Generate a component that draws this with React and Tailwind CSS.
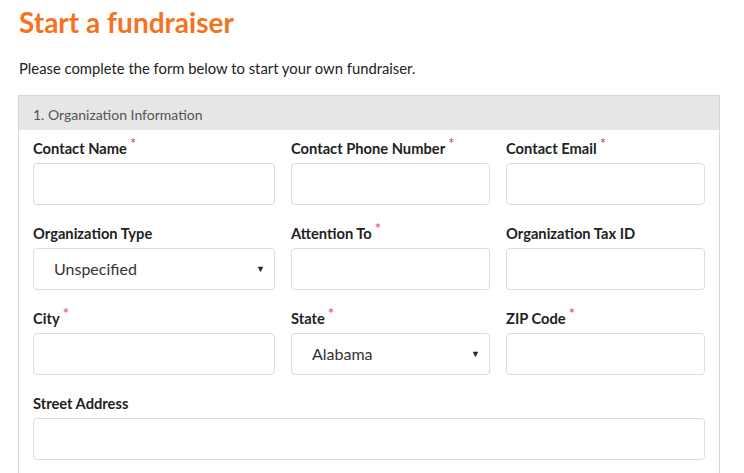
const fields = [
  { label: 'Contact Name', required: true },
  { label: 'Contact Phone Number', required: true },
  { label: 'Contact Email', required: true },
  { label: 'Organization Type', select: 'Unspecified' },
  { label: 'Attention To', required: true },
  { label: 'Organization Tax ID' },
  { label: 'City', required: true },
  { label: 'State', required: true, select: 'Alabama' },
  { label: 'ZIP Code', required: true },
]

function Field({ label, required, select }) {
  return (
    <div className="flex flex-col">
      <label className="text-[14.7px] leading-[20px] font-bold text-[#222] flex items-start">
        {label}
        {required && <span className="text-[15px] leading-[12px] text-[#e8356b] ml-[3px] -mt-[1px] font-normal">*</span>}
      </label>
      <div className="mt-[5px] h-[42px] border border-[#dcdcdc] rounded-[4px] bg-white flex items-center justify-between pl-[20px] pr-[9px]">
        {select && (
          <>
            <span className="text-[16px] text-[#333]">{select}</span>
            <span className="text-[9px] text-[#222]">▼</span>
          </>
        )}
      </div>
    </div>
  )
}

export default function App() {
  return (
    <div className="w-[744px] h-[473px] overflow-hidden bg-white pl-[18px] pr-[24px] font-['Lato','Liberation_Sans',sans-serif]">
      <h1 className="pt-[4px] text-[28px] leading-[36px] font-bold text-[#f47321] pl-[1px]">Start a fundraiser</h1>
      <p className="mt-[18px] text-[14.8px] leading-[20px] text-[#222] pl-[1px]">
        Please complete the form below to start your own fundraiser.
      </p>
      <div className="mt-[17px] border border-b-0 border-[#d6d6d6] h-[400px]">
        <div className="h-[34px] bg-[#e6e6e6] flex items-center pl-[14px] pt-[2px] text-[14px] text-[#555]">
          1. Organization Information
        </div>
        <div className="pl-[14px] pr-[13px] pt-[8px]">
          <div className="grid grid-cols-[242px_199px_199px] gap-x-[16px] gap-y-[18px]">
            {fields.map((f) => (
              <Field key={f.label} {...f} />
            ))}
            <div className="col-span-3">
              <Field label="Street Address" />
            </div>
          </div>
        </div>
      </div>
    </div>
  )
}
